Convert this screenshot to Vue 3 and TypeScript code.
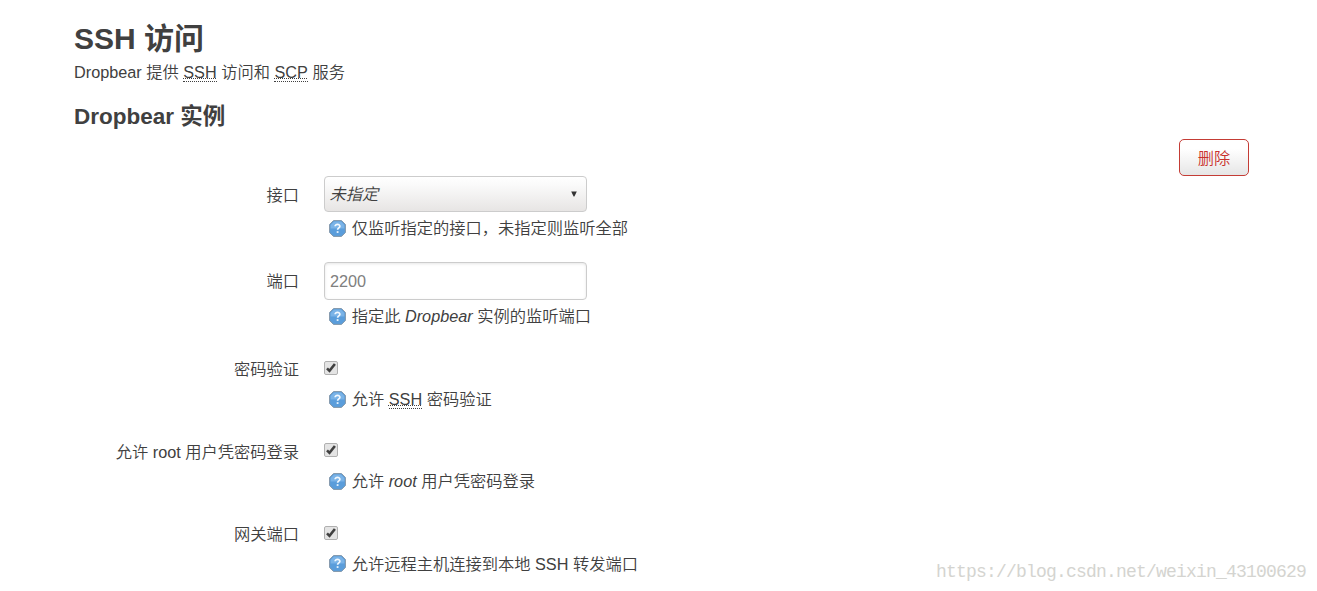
<script setup lang="ts">
type Part = { text: string; kind?: 'abbr' | 'em' }
interface Field {
  label: string
  type: 'select' | 'input' | 'checkbox'
  help: Part[]
}

const fields: Field[] = [
  { label: '接口', type: 'select', help: [{ text: '仅监听指定的接口，未指定则监听全部' }] },
  {
    label: '端口',
    type: 'input',
    help: [{ text: '指定此 ' }, { text: 'Dropbear', kind: 'em' }, { text: ' 实例的监听端口' }],
  },
  {
    label: '密码验证',
    type: 'checkbox',
    help: [{ text: '允许 ' }, { text: 'SSH', kind: 'abbr' }, { text: ' 密码验证' }],
  },
  {
    label: '允许 root 用户凭密码登录',
    type: 'checkbox',
    help: [{ text: '允许 ' }, { text: 'root', kind: 'em' }, { text: ' 用户凭密码登录' }],
  },
  { label: '网关端口', type: 'checkbox', help: [{ text: '允许远程主机连接到本地 SSH 转发端口' }] },
]
</script>

<template>
  <main class="page">
    <h1>SSH 访问</h1>
    <p class="intro">Dropbear 提供 <span class="abbr">SSH</span> 访问和 <span class="abbr">SCP</span> 服务</p>
    <h2>Dropbear 实例</h2>
    <div class="actions"><button class="remove">删除</button></div>

    <div v-for="field in fields" :key="field.label" class="row" :class="field.type">
      <div class="label">{{ field.label }}</div>
      <div class="field">
        <div v-if="field.type === 'select'" class="control dropdown">
          <em>未指定</em>
          <svg width="6" height="6" viewBox="0 0 6 6"><path d="M.2 .6H5.8L3.4 5.6H2.6Z" fill="#333" /></svg>
        </div>
        <div v-else-if="field.type === 'input'" class="control textbox">2200</div>
        <svg v-else class="check" width="14" height="14" viewBox="0 0 14 14">
          <rect x=".5" y=".5" width="13" height="13" rx="1.5" fill="#e4e4e4" stroke="#b0b0b0" />
          <path d="M3 7.3 5.5 9.8 10.9 3" fill="none" stroke="#404040" stroke-width="2.6" />
        </svg>
        <div class="help">
          <svg class="icon" width="17" height="17" viewBox="0 0 17 17">
            <path d="M4.5 .6H12.5L16.4 4.5V12.5L12.5 16.4H4.5L.6 12.5V4.5Z" fill="#5a9ddb" stroke="#8296a8" stroke-linejoin="round" />
            <path d="M5 1.6H12L15.4 5V8.5H1.6V5Z" fill="#8fc1ee" opacity=".6" />
            <path d="M6.1 6.3C6.1 3.7 10.9 3.7 10.9 6.3C10.9 7.9 8.6 8 8.6 9.8" fill="none" stroke="#f2f9ff" stroke-width="1.7" />
            <rect x="7.7" y="11.2" width="1.8" height="1.7" fill="#f2f9ff" />
          </svg>
          <span class="help-text"><span v-for="part in field.help" :key="part.text" :class="part.kind">{{ part.text }}</span></span>
        </div>
      </div>
    </div>
    <div class="watermark">https://blog.csdn.net/weixin_43100629</div>
  </main>
</template>

<style>
html,
body {
  background: #fff;
  overflow: hidden;
}
</style>

<style scoped>
.page {
  position: relative;
  box-sizing: border-box;
  width: 1317px;
  height: 591px;
  overflow: hidden;
  padding: 16px 68px 0 74px;
  background: #fff;
  color: #404040;
  font-family: 'Liberation Sans', 'Noto Sans CJK SC', sans-serif;
  font-size: 16.25px;
  line-height: 22px;
}
h1 {
  margin: 0;
  font-size: 30px;
  line-height: 45px;
}
.intro {
  margin: 0;
  height: 22px;
  white-space: pre;
}
.intro,
.label,
.help,
.dropdown {
  font-weight: 350;
}
h2 {
  margin: 11px 0 0;
  font-size: 22.5px;
  line-height: 45px;
}
.abbr {
  position: relative;
  text-decoration: underline dotted 1px;
  text-underline-offset: 0;
  text-decoration-skip-ink: none;
}
.abbr::after {
  content: '';
  position: absolute;
  left: 0;
  right: 0;
  bottom: -1px;
  border-bottom: 1px dotted #404040;
}
.em {
  font-style: italic;
}
.actions {
  display: flex;
  justify-content: flex-end;
  height: 37px;
}
.remove {
  box-sizing: border-box;
  width: 70px;
  height: 37px;
  padding: 1px 0 0;
  border: 1px solid #c43c35;
  border-radius: 5px;
  background: linear-gradient(#fff, #fff 25%, #e6e6e6);
  color: #c9302c;
  font: 350 16.25px/34px 'Liberation Sans', 'Noto Sans CJK SC', sans-serif;
}
.row {
  display: flex;
  height: 82.4px;
}
.row.select {
  height: 86px;
}
.row.input {
  height: 88px;
}
.label {
  width: 225px;
  margin-right: 25px;
  padding-top: 8.2px;
  text-align: right;
}
.control {
  box-sizing: border-box;
  display: flex;
  align-items: center;
  width: 263px;
  border: 1px solid #ccc;
  border-radius: 4px;
}
.dropdown {
  height: 36px;
  justify-content: space-between;
  padding: 0 9px 0 4.5px;
  background: linear-gradient(#fff, #fbfbfb 20%, #e7e5e4);
}
.textbox {
  height: 38px;
  padding-left: 5px;
  color: #808080;
  box-shadow: inset 0 1px 3px rgba(0, 0, 0, 0.1);
}
.check {
  display: block;
  margin: 11px 0 13px;
}
.help {
  display: flex;
  align-items: center;
  height: 22px;
  margin-top: 5px;
  padding-left: 5px;
}
.checkbox .help {
  margin-top: 0;
}
.icon {
  flex: none;
  margin-right: 5.7px;
}
.help-text {
  white-space: pre;
}
.watermark {
  position: absolute;
  left: 936px;
  top: 561px;
  color: #d4d4d0;
  font: 18px/22px 'Liberation Mono', monospace;
  letter-spacing: -0.8px;
}
</style>
